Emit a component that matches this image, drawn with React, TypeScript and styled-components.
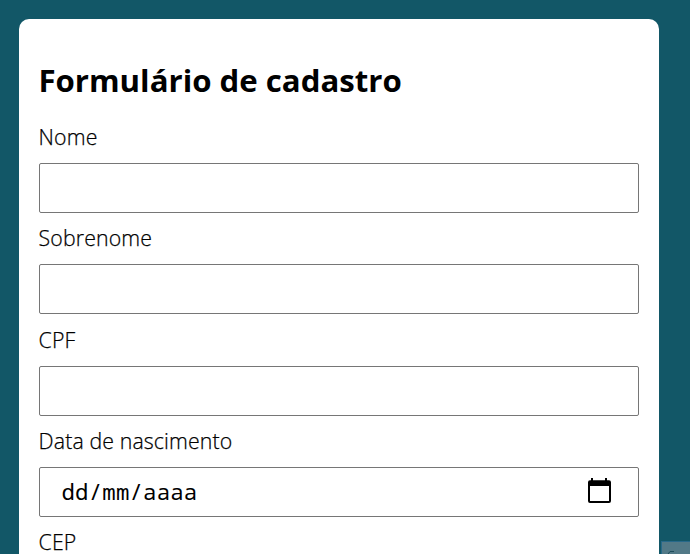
import React from "react";
import styled, { createGlobalStyle } from "styled-components";

const GlobalStyle = createGlobalStyle`
  * { box-sizing: border-box; }
  html, body { margin: 0; height: 100%; overflow: hidden; background: #125767; }
  body { font-family: "Open Sans", sans-serif; color: #000; }
`;

const Page = styled.main`
  height: 554px;
  padding: 19px 31px 0 19px;
  overflow: hidden;
`;

const Card = styled.form`
  height: 700px;
  padding: 40px 20px;
  background: #fff;
  border-radius: 10px;
`;

const Title = styled.h1`
  width: max-content;
  margin: 0 0 22px -0.6px;
  font-size: 31.2px;
  line-height: 42px;
  font-weight: 700;
  white-space: nowrap;
`;

const Fields = styled.div`
  display: grid;
  grid-auto-rows: 101.33px;
`;

const Field = styled.label`
  display: block;
`;

const Caption = styled.span`
  display: block;
  width: max-content;
  height: 40px;
  margin-left: -0.4px;
  font-size: 21.3px;
  line-height: 28.6px;
  font-weight: 300;
  letter-spacing: 0.12px;
  -webkit-text-stroke: 0.25px #000;
`;

const TextInput = styled.input`
  display: block;
  width: 100%;
  height: 50px;
  padding: 0 20px;
  border: 1px solid #767676;
  border-radius: 2px;
  outline: none;
  font: 300 21px "Open Sans", sans-serif;
`;

const DateBox = styled.div`
  display: flex;
  align-items: center;
  justify-content: space-between;
  height: 50px;
  padding: 0 24px 0 21.5px;
  border: 1px solid #767676;
  border-radius: 2px;
`;

const DateHint = styled.span`
  font: 22.4px/30px "Noto Sans Mono", "DejaVu Sans Mono", monospace;
  letter-spacing: 0.16px;
`;

const CornerBadge = styled.div`
  position: fixed;
  left: 661px;
  top: 541px;
  width: 60px;
  height: 40px;
  border: 1px solid #27698a;
  background: #527987;
`;

const names = ["Nome", "Sobrenome", "CPF"];

export default function App() {
  return (
    <>
      <GlobalStyle />
      <Page>
        <Card>
          <Title>Formulário de cadastro</Title>
          <Fields>
            {names.map((name) => (
              <Field key={name}>
                <Caption>{name}</Caption>
                <TextInput type="text" />
              </Field>
            ))}
            <Field as="div">
              <Caption>Data de nascimento</Caption>
              <DateBox>
                <DateHint>dd/mm/aaaa</DateHint>
                <svg width="28" height="28" viewBox="0 0 28 28" fill="none">
                  <path d="M5 0h2v3H5zM19 0h2v3h-2z" fill="#000" />
                  <path d="M3 3h21v5H3z" fill="#000" />
                  <rect x="3" y="3.3" width="21" height="20.7" rx="1" stroke="#000" strokeWidth="2" />
                </svg>
              </DateBox>
            </Field>
            <Field>
              <Caption>CEP</Caption>
              <TextInput type="text" />
            </Field>
          </Fields>
        </Card>
      </Page>
      <CornerBadge>
        <svg width="28" height="20" viewBox="0 0 28 20" fill="none">
          <path d="M6 12l2-2.5h4" stroke="#1d4c5a" />
        </svg>
      </CornerBadge>
    </>
  );
}
